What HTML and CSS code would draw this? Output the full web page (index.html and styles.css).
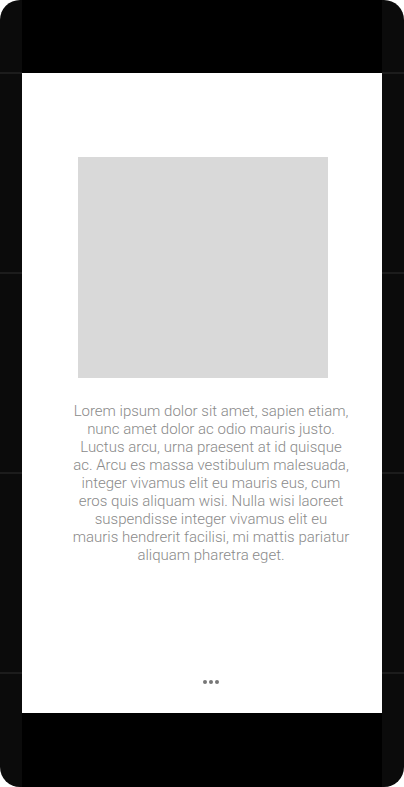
FILE: index.html
```html
<!DOCTYPE html>
<html>
<head>
<meta charset="utf-8">
<link rel="stylesheet" href="styles.css">
</head>
<body>
<div class="device">
  <div class="rail">
    <div class="seg"></div><div class="seg"></div><div class="seg"></div><div class="seg"></div>
  </div>
  <div class="center">
    <div class="bar-top"></div>
    <div class="screen">
      <div class="image"></div>
      <p class="copy">Lorem ipsum dolor sit amet, sapien etiam, nunc amet dolor ac odio mauris justo. Luctus arcu, urna praesent at id quisque ac. Arcu es massa vestibulum malesuada, integer vivamus elit eu mauris eus, cum eros quis aliquam wisi. Nulla wisi laoreet suspendisse integer vivamus elit eu mauris hendrerit facilisi, mi mattis pariatur aliquam pharetra eget.</p>
      <div class="dots"><span></span><span></span><span></span></div>
    </div>
    <div class="bar-bottom"></div>
  </div>
  <div class="rail">
    <div class="seg"></div><div class="seg"></div><div class="seg"></div><div class="seg"></div>
  </div>
</div>
</body>
</html>
```

FILE: styles.css
```css
html, body {
  margin: 0;
  padding: 0;
  background: #ffffff;
}
.device {
  width: 404px;
  height: 787px;
  border-radius: 20px;
  overflow: hidden;
  background: #0b0b0b;
  display: grid;
  grid-template-columns: 22px 360px 22px;
}
.rail {
  padding-top: 72px;
  display: flex;
  flex-direction: column;
}
.seg {
  height: 198px;
  border-top: 2px solid #1c1c1c;
}
.center {
  display: flex;
  flex-direction: column;
}
.bar-top {
  height: 73px;
  background: #000;
}
.bar-bottom {
  height: 74px;
  background: #000;
}
.screen {
  height: 640px;
  background: #fff;
  display: flex;
  flex-direction: column;
  align-items: center;
}
.image {
  margin: 84px 0 0 2px;
  width: 250px;
  height: 221px;
  background: #d9d9d9;
}
.copy {
  margin: 24px 0 0 0;
  box-sizing: border-box;
  width: 360px;
  padding: 0 31px 0 49px;
  font-family: Roboto, "Liberation Sans", sans-serif;
  font-weight: 300;
  font-size: 15px;
  line-height: 18px;
  color: #8a8a8a;
  text-align: center;
}
.dots {
  margin-top: auto;
  margin-bottom: 29px;
  padding-left: 17px;
  display: flex;
  gap: 2px;
}
.dots span {
  width: 4px;
  height: 4px;
  border-radius: 50%;
  background: #777;
}
```
